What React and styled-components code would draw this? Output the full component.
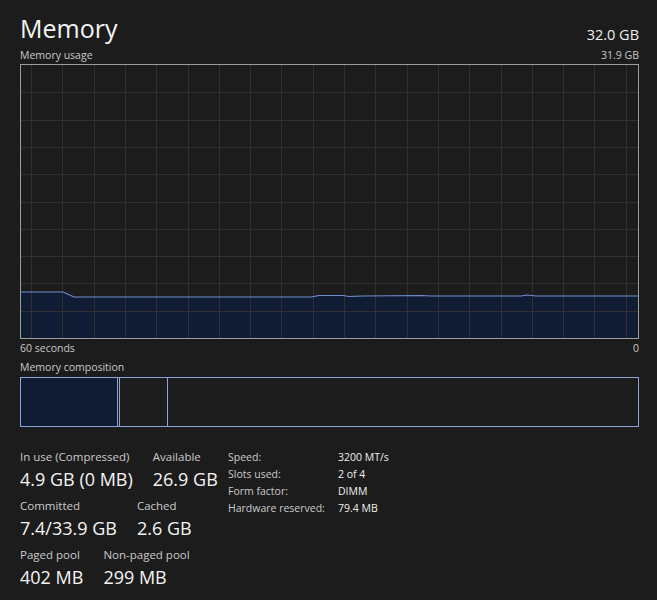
import React from "react";
import styled, { createGlobalStyle } from "styled-components";

const GlobalStyle = createGlobalStyle`
  html, body {
    margin: 0;
    background: #1c1c1c;
  }
  body {
    font-family: "Open Sans", "Noto Sans", sans-serif;
    color: #f2f2f2;
  }
`;

const CHART_W = 617;
const CHART_H = 273;

// samples of memory usage, x in px from the left of the plot, y from the top
const usage = [
  [0, 227], [42, 227], [53, 232], [290, 232], [298, 230.5], [322, 230.5],
  [328, 231.5], [342, 231], [400, 230.5], [410, 231], [500, 231],
  [506, 230], [515, 231], [617, 231],
];

const composition = [
  { name: "In use", width: "96px", fill: true },
  { name: "Modified", width: "1px" },
  { name: "Standby", width: "47px" },
  { name: "Free", width: "auto", last: true },
];

const stats = [
  [
    { label: "In use (Compressed)", value: "4.9 GB (0 MB)" },
    { label: "Available", value: "26.9 GB" },
  ],
  [
    { label: "Committed", value: "7.4/33.9 GB" },
    { label: "Cached", value: "2.6 GB" },
  ],
  [
    { label: "Paged pool", value: "402 MB" },
    { label: "Non-paged pool", value: "299 MB" },
  ],
];

const details = [
  ["Speed:", "3200 MT/s"],
  ["Slots used:", "2 of 4"],
  ["Form factor:", "DIMM"],
  ["Hardware reserved:", "79.4 MB"],
];

function UsageGraph() {
  const vLines = [];
  for (let x = 10; x < CHART_W; x += 31.3) vLines.push(Math.round(x) + 0.5);
  const hLines = [];
  for (let i = 1; i < 10; i++) hLines.push(Math.round(i * 27.3) + 0.5);

  const line = usage.map(([x, y], i) => `${i ? "L" : "M"}${x} ${y}`).join(" ");
  const area = `${line} L${CHART_W} ${CHART_H} L0 ${CHART_H} Z`;

  return (
    <svg width={CHART_W} height={CHART_H} viewBox={`0 0 ${CHART_W} ${CHART_H}`}>
      <path d={area} fill="#0f1c33" />
      {vLines.map((x) => (
        <line key={"v" + x} x1={x} x2={x} y1={0} y2={CHART_H} stroke="#303030" />
      ))}
      {hLines.map((y) => (
        <line key={"h" + y} x1={0} x2={CHART_W} y1={y} y2={y} stroke="#303030" />
      ))}
      <path d={line} fill="none" stroke="#6e8fcf" strokeWidth="1.2" />
    </svg>
  );
}

export default function App() {
  return (
    <Page>
      <GlobalStyle />
      <Header>
        <Title>Memory</Title>
        <Total>32.0 GB</Total>
      </Header>

      <CaptionRow>
        <span>Memory usage</span>
        <span>31.9 GB</span>
      </CaptionRow>
      <Chart>
        <UsageGraph />
      </Chart>
      <CaptionRow $top="2px">
        <span>60 seconds</span>
        <span>0</span>
      </CaptionRow>

      <CaptionRow $top="5px">
        <span>Memory composition</span>
      </CaptionRow>
      <CompositionBar>
        {composition.map((s) => (
          <Segment key={s.name} $width={s.width} $fill={s.fill} $last={s.last} />
        ))}
      </CompositionBar>

      <Stats>
        <StatRows>
          {stats.map((row, i) => (
            <StatRow key={i}>
              {row.map((s) => (
                <Stat key={s.label}>
                  <StatLabel>{s.label}</StatLabel>
                  <StatValue>{s.value}</StatValue>
                </Stat>
              ))}
            </StatRow>
          ))}
        </StatRows>
        <Details>
          {details.map(([k, v]) => (
            <React.Fragment key={k}>
              <DetailKey>{k}</DetailKey>
              <DetailValue>{v}</DetailValue>
            </React.Fragment>
          ))}
        </Details>
      </Stats>
    </Page>
  );
}

const Page = styled.div`
  width: 619px;
  padding: 12px 0 0 20px;
`;

const Header = styled.div`
  display: flex;
  justify-content: space-between;
  align-items: baseline;
  height: 32px;
`;

const Title = styled.div`
  font-size: 25px;
  line-height: 32px;
  color: #f4f4f4;
`;

const Total = styled.div`
  font-size: 14.5px;
  line-height: 32px;
  color: #efefef;
  position: relative;
  top: 2px;
`;

const CaptionRow = styled.div`
  display: flex;
  justify-content: space-between;
  font-size: 10.5px;
  line-height: 14px;
  color: #c9c9c9;
  margin-top: ${(p) => p.$top || "4px"};
`;

const Chart = styled.div`
  margin-top: 2px;
  border: 1px solid #9c9c9c;
  height: ${CHART_H}px;
  background: #1c1c1c;

  svg {
    display: block;
  }
`;

const CompositionBar = styled.div`
  margin-top: 3px;
  height: 48px;
  border: 1px solid #8ba4d6;
  display: flex;
`;

const Segment = styled.div`
  flex: ${(p) => (p.$last ? "1 1 auto" : `0 0 ${p.$width}`)};
  background: ${(p) => (p.$fill ? "#0f1c33" : "transparent")};
  border-right: ${(p) => (p.$last ? "none" : "1px solid #8ba4d6")};
`;

const Stats = styled.div`
  margin-top: 22px;
  display: flex;
`;

const StatRows = styled.div`
  width: 208px;
  display: flex;
  flex-direction: column;
  gap: 8px;
`;

const StatRow = styled.div`
  display: flex;
  gap: 20px;
`;

const Stat = styled.div`
  display: flex;
  flex-direction: column;
`;

const StatLabel = styled.div`
  font-size: 11.5px;
  line-height: 16px;
  color: #cbcbcb;
  white-space: nowrap;
`;

const StatValue = styled.div`
  margin-top: 3px;
  font-size: 18px;
  line-height: 22px;
  color: #f4f4f4;
  white-space: nowrap;
`;

const Details = styled.div`
  display: grid;
  grid-template-columns: 110px auto;
  grid-auto-rows: 17px;
  align-content: start;
  font-size: 10.5px;
  line-height: 17px;
`;

const DetailKey = styled.div`
  color: #cbcbcb;
  white-space: nowrap;
`;

const DetailValue = styled.div`
  color: #efefef;
  white-space: nowrap;
`;
